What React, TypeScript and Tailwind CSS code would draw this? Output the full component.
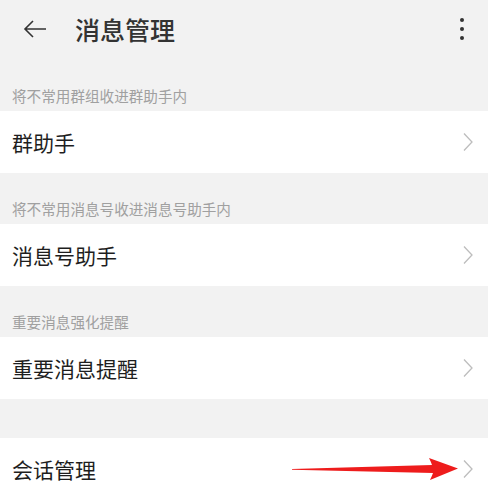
import React from "react";

const Chevron = () => (
  <svg width="12" height="20" viewBox="0 0 12 20" className="shrink-0">
    <path d="M2 1.5 L10 10 L2 18.5" fill="none" stroke="#bdbdbd" strokeWidth="1.3" />
  </svg>
);

const Row = ({ text, children }: { text: string; children?: React.ReactNode }) => (
  <div className="relative flex h-[62px] items-center justify-between bg-white pl-[12px] pr-[14px]">
    <span className="text-[21px] leading-none text-[#1e1e1e]">{text}</span>
    <Chevron />
    {children}
  </div>
);

const Label = ({ text, h }: { text: string; h: string }) => (
  <div className={`flex items-end pl-[12px] pb-[5px] ${h}`}>
    <span className="text-[14.6px] leading-[20px] text-[#a0a0a0]">{text}</span>
  </div>
);

export default function App() {
  return (
    <div
      className="h-[498px] w-[488px] overflow-hidden bg-[#f2f2f2]"
      style={{ fontFamily: '"Noto Sans CJK SC", "Noto Sans", sans-serif' }}
    >
      <div className="flex h-[58px] items-center pl-[22px] pr-[24px]">
        <svg width="26" height="20" viewBox="0 0 26 20" className="shrink-0">
          <path d="M3 10 H24 M11 2 L3 10 L11 18" fill="none" stroke="#333" strokeWidth="1.6" strokeLinejoin="miter" />
        </svg>
        <span className="ml-[27px] text-[25px] font-medium leading-none text-[#333]">消息管理</span>
        <div className="ml-auto flex flex-col items-center gap-[5px]">
          <span className="h-[4px] w-[4px] rounded-full bg-[#333]" />
          <span className="h-[4px] w-[4px] rounded-full bg-[#333]" />
          <span className="h-[4px] w-[4px] rounded-full bg-[#333]" />
        </div>
      </div>
      <Label text="将不常用群组收进群助手内" h="h-[53px]" />
      <Row text="群助手" />
      <Label text="将不常用消息号收进消息号助手内" h="h-[51px]" />
      <Row text="消息号助手" />
      <Label text="重要消息强化提醒" h="h-[51px]" />
      <Row text="重要消息提醒" />
      <div className="h-[39px]" />
      <Row text="会话管理">
        <svg className="absolute left-[288px] top-[18px]" width="175" height="26" viewBox="0 0 175 26">
          <path
            d="M4 13 L144 9 Q143 6 141 2 L170 12.5 L142 24 Q144 20 145 17 L4 13.8 Z"
            fill="#ee1c1c"
          />
        </svg>
      </Row>
    </div>
  );
}
